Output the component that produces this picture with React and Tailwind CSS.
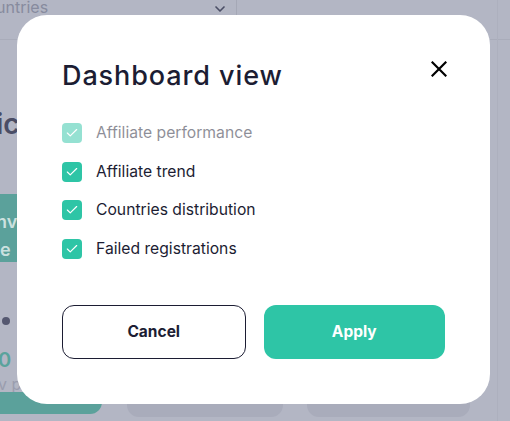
import { Check, ChevronDown } from 'lucide-react';

const options = [
    { label: 'Affiliate performance', disabled: true },
    { label: 'Affiliate trend' },
    { label: 'Countries distribution' },
    { label: 'Failed registrations' },
];

const Checkbox = ({ label, disabled }) => (
    <label className={`flex items-center gap-[14px] h-[20px] ${disabled ? 'opacity-50' : ''}`}>
        <span className="w-[20px] h-[20px] rounded-[4px] bg-[#2ec5a6] flex items-center justify-center">
            <Check className="w-[14px] h-[14px] text-white" strokeWidth={2} />
        </span>
        <span className="text-[15.7px] text-[#1c1d33]">{label}</span>
    </label>
);

const App = () => {
    return (
        <div className="relative w-[510px] h-[421px] overflow-hidden bg-[#b3b6c4] font-['Inter',sans-serif]">
            {/* background dashboard, dimmed */}
            <div className="flex h-[40px] border-b border-[#a9acba]">
                <div className="w-[237px] border-r border-[#a5a8b6] flex items-start justify-between pr-[8px]">
                    <span className="text-[16px] leading-[20px] text-[#878b9e] -mt-[3px] -ml-[4px]">untries</span>
                    <ChevronDown className="w-[16px] h-[16px] text-[#4b4e66] mt-[1px]" strokeWidth={2.5} />
                </div>
            </div>
            <div className="flex">
                <div className="w-[100px] pt-[70px]">
                    <div className="text-[28px] font-semibold text-[#4a4d65] -ml-[4px] leading-none">ic</div>
                    <div className="mt-[56px] h-[68px] bg-[#5ba19b] rounded-r-[8px] pt-[14px] text-white/70 text-[18px] font-semibold leading-[28px]">
                        <div className="-ml-[4px]">nv</div>
                        <div>e</div>
                    </div>
                </div>
            </div>
            <div className="absolute left-[2px] top-[317px] w-[8px] h-[8px] rounded-full bg-[#555870]" />
            <div className="absolute left-[-2px] top-[345px] text-[20px] text-[#5aa39c] font-semibold">0</div>
            <div className="absolute left-[-2px] top-[372px] text-[16px] text-[#9a9dae]">v p</div>
            <div className="absolute left-0 top-[392px] w-[102px] h-[22px] rounded-br-[12px] bg-[#5ba19b]" />
            <div className="absolute left-[127px] top-[380px] w-[156px] h-[37px] rounded-[12px] bg-[#a9acbb]" />
            <div className="absolute left-[307px] top-[380px] w-[163px] h-[37px] rounded-[12px] bg-[#a9acbb]" />
            <div className="absolute left-[497px] top-0 w-px h-[421px] bg-[#adb0be]" />

            {/* modal */}
            <div className="absolute left-[17px] top-[15px] w-[473px] h-[389px] bg-white rounded-[30px] px-[45px] pt-[44px] pb-[45px] flex flex-col">
                <div className="flex items-start justify-between">
                    <h2 className="text-[27px] font-medium text-[#1c1d33] leading-[34px] tracking-[0.9px]">Dashboard view</h2>
                    <button className="mt-[2px] mr-[-2px]">
                        <svg width="16" height="16" viewBox="0 0 16 16" fill="none" stroke="#000" strokeWidth="2.2" strokeLinecap="square">
                            <path d="M1.5 1.5L14.5 14.5M14.5 1.5L1.5 14.5" />
                        </svg>
                    </button>
                </div>
                <div className="mt-[30px] flex flex-col gap-[18.5px]">
                    {options.map(o => (
                        <Checkbox key={o.label} {...o} />
                    ))}
                </div>
                <div className="mt-auto flex gap-[18px]">
                    <button className="flex-1 h-[54px] rounded-[12px] border border-[#1c1d33] text-[15.5px] font-bold text-[#1c1d33]">Cancel</button>
                    <button className="flex-1 h-[54px] rounded-[12px] bg-[#2ec5a6] text-[15.5px] font-bold text-white">Apply</button>
                </div>
            </div>
        </div>
    );
};

export default App;
